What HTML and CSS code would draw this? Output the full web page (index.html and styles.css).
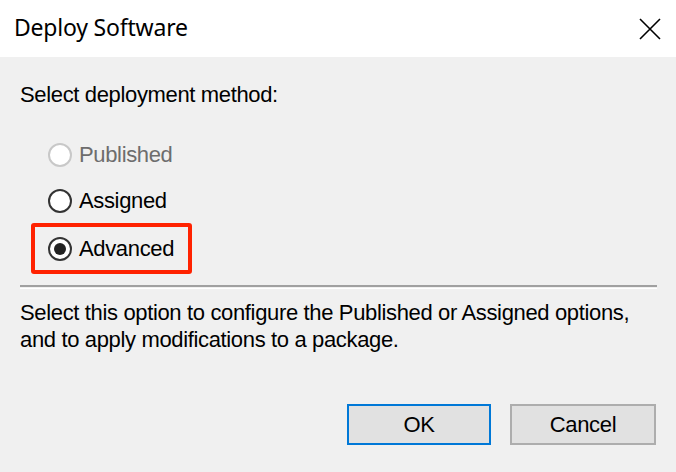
FILE: index.html
```html
<!DOCTYPE html>
<html>
<head>
<meta charset="utf-8">
<link rel="stylesheet" href="styles.css">
</head>
<body>
<div class="dialog">
  <div class="titlebar">
    <span class="title">Deploy Software</span>
    <svg class="close" width="22" height="22" viewBox="0 0 22 22"><path d="M1 1 L21 21 M21 1 L1 21" stroke="#000" stroke-width="1.6" fill="none"/></svg>
  </div>
  <div class="body">
    <div class="prompt">Select deployment method:</div>
    <div class="options">
      <div class="radio-row disabled"><span class="radio"></span><span class="label">Published</span></div>
      <div class="radio-row second"><span class="radio"></span><span class="label">Assigned</span></div>
      <div class="highlight"><div class="radio-row inner"><span class="radio checked"></span><span class="label">Advanced</span></div></div>
    </div>
    <div class="separator"></div>
    <p class="desc">Select this option to configure the Published or Assigned options,<br>and to apply modifications to a package.</p>
    <div class="buttons">
      <button class="btn default">OK</button>
      <button class="btn cancel">Cancel</button>
    </div>
  </div>
</div>
</body>
</html>
```
FILE: styles.css
```css
html, body { margin: 0; padding: 0; }
body { width: 676px; height: 472px; overflow: hidden; font-family: "Liberation Sans", Arial, sans-serif; }
.dialog { width: 676px; height: 472px; display: flex; flex-direction: column; }
.titlebar { height: 57px; background: #fff; display: flex; align-items: center; justify-content: space-between; padding: 0 15px 4px 14px; box-sizing: border-box; }
.title { font-family: "Noto Sans", "Open Sans", sans-serif; font-size: 23px; color: #000; letter-spacing: -0.2px; }
.close { display: block; margin-top: 4px; }
.body { flex: 1; background: #f0f0f0; padding: 0 19px 0 20px; display: flex; flex-direction: column; color: #000; font-size: 22px; letter-spacing: -0.35px; }
.prompt { margin-top: 24px; line-height: 27px; height: 27px; }
.options { margin-top: 23px; display: flex; flex-direction: column; }
.radio-row { display: flex; align-items: center; gap: 7px; padding-left: 28px; height: 47px; }
.radio-row.second { height: 45px; }
.radio { width: 24px; height: 24px; box-sizing: border-box; border: 2px solid #333; border-radius: 50%; background: #fff; position: relative; flex: none; }
.radio.checked::after { content: ""; position: absolute; left: 4px; top: 4px; width: 12px; height: 12px; border-radius: 50%; background: #222; }
.disabled .radio { border-color: #c8c8c8; }
.disabled .label { color: #6d6d6d; }
.highlight { margin-left: 11px; width: 161px; height: 51px; box-sizing: border-box; border: 4px solid #ff2200; border-radius: 3px; display: flex; align-items: center; }
.radio-row.inner { padding-left: 13px; height: auto; }
.separator { margin-top: 11px; height: 1px; border-top: 2px solid #a0a0a0; border-bottom: 1px solid #fff; }
.desc { margin: 10px 0 0; line-height: 27px; }
.buttons { margin-top: auto; margin-bottom: 27px; display: flex; justify-content: flex-end; gap: 19px; margin-right: 1px; }
.btn { width: 144px; height: 41px; box-sizing: border-box; background: #e1e1e1; border: 2px solid #adadad; font-family: "Liberation Sans", Arial, sans-serif; font-size: 22px; letter-spacing: -0.35px; color: #000; padding: 0; }
.btn.cancel { width: 146px; }
.btn.default { border-color: #0078d7; }
```
